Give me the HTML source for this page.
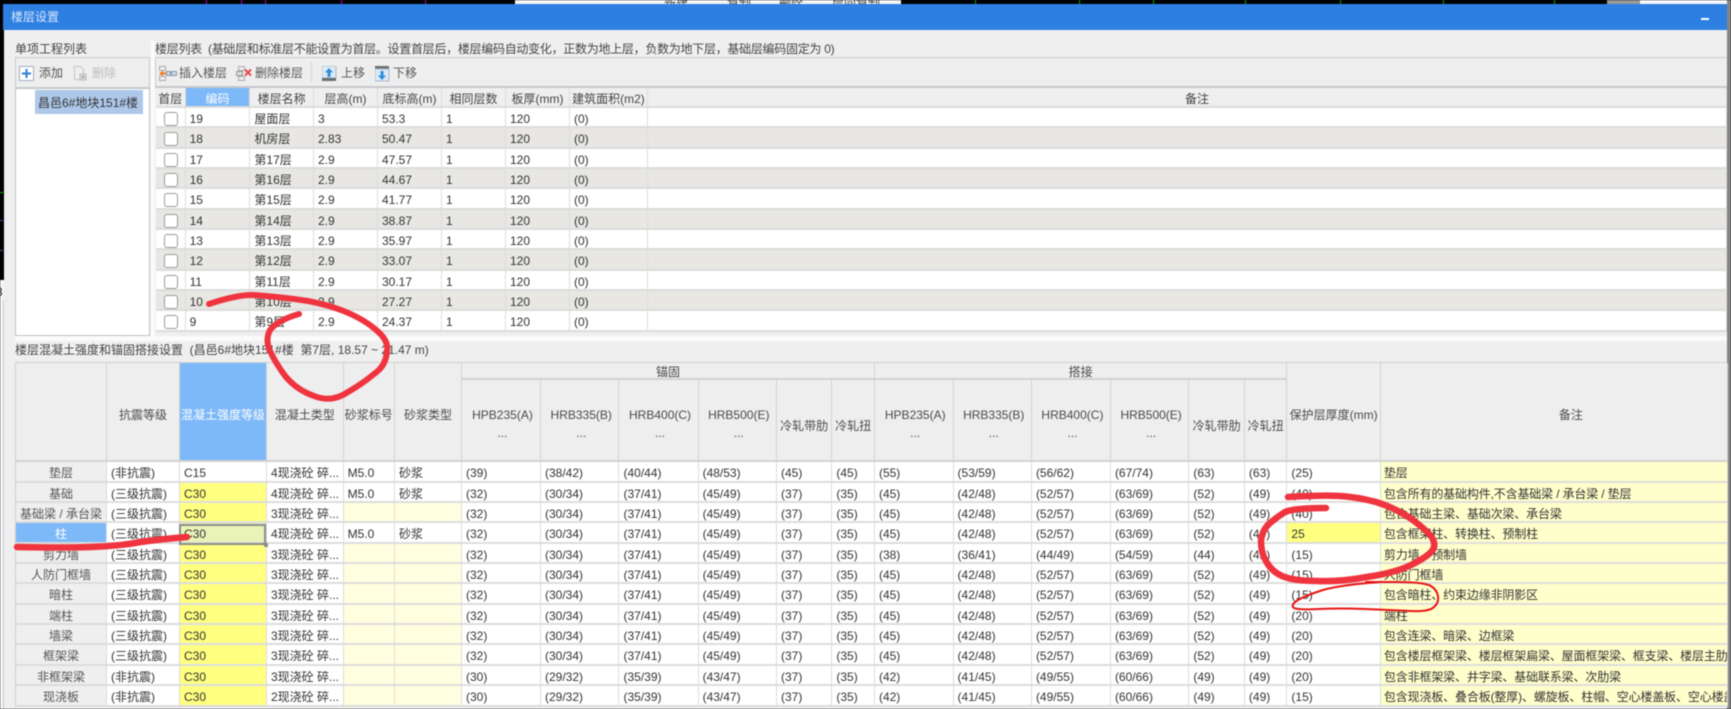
<!DOCTYPE html>
<html lang="zh"><head><meta charset="utf-8"><title>楼层设置</title>
<style>
html,body{margin:0;padding:0;background:#000}
body{width:1731px;height:709px;overflow:hidden;position:relative;font:12px/20px "Liberation Sans","Noto Sans CJK SC",sans-serif;color:#333}
#w{position:absolute;left:0;top:0;width:1731px;height:709px;overflow:hidden;filter:blur(.4px)}
.a{position:absolute;white-space:nowrap}
p{margin:0;overflow:hidden;white-space:nowrap;padding-left:4px;box-sizing:border-box;border-right:1px solid #dcdcdc;border-bottom:2px solid #dcdcdc;line-height:22px}
.r{display:contents}
.g{display:grid;position:absolute}
#u{left:156px;top:88px;width:1571px;grid-template-columns:29.6px 64.8px 63.6px 64px 64px 64px 64px 78px 1079px;grid-template-rows:20px;grid-auto-rows:20.35px;background:#fff}
#u .h p{background:#efefef;text-align:center;padding:0;color:#444;line-height:22px}
#u .h p.on,#l p.on{background:#7db8f8;color:#fff}
#u .z p{background:#e8e7e3}
#u .c{position:relative;background:#fff}
#u .z .c{background:#e8e7e3}
.c i{position:absolute;left:8px;top:4px;width:14px;height:14px;box-sizing:border-box;border:1px solid #9a9a9a;border-radius:3px;background:#fff}
#l{left:15px;top:363px;width:1712px;grid-template-columns:91px 73px 87px 76.6px 51.4px 67px 79px 78.5px 79.1px 78.4px 55.4px 42.6px 78.6px 78.4px 79px 78.4px 55.6px 42.5px 93.5px 347px;grid-template-rows:17.4px 82px;grid-auto-rows:20.35px;background:#fff;border-left:1px solid #d0d0d0;box-sizing:border-box}
#l .t{background:#eee;text-align:center;padding:2px 0 0;color:#4a4a4a;border-color:#d2d2d2;display:flex;align-items:center;justify-content:center;line-height:18px;white-space:normal}
#l .s{grid-row:span 2;padding-top:7px}
#l .m{padding:8px 0 0 3px}
#l .t2{padding-top:12px}
#l .k{background:#efefef;text-align:center;padding:0;color:#555}
#l .y{background:#ffff80}
#l .e{background:#ffffe0}
#l .n{background:#ffc;padding-left:3px;letter-spacing:-.15px}
#l p{line-height:22.5px}
#l p.on{background:#7db8f8;color:#fff}
.bd{position:absolute;box-sizing:border-box}
</style></head><body>
<div id="w">
<!-- background behind the dialog -->
<div class="bd" style="left:515px;top:0;width:386px;height:5px;background:#f4f5f7;overflow:hidden">
<span class="a" style="left:149px;top:-3px;line-height:14px;color:#444">新建</span><span class="a" style="left:212px;top:-3px;line-height:14px;color:#444">复制</span><span class="a" style="left:264px;top:-3px;line-height:14px;color:#444">删除</span><span class="a" style="left:317px;top:-3px;line-height:14px;color:#444">层间复制</span>
</div>
<div class="bd" style="left:206px;top:0;width:1px;height:5px;background:#c0c"></div>
<div class="bd" style="left:241px;top:0;width:1px;height:5px;background:#c0c"></div>
<div class="bd" style="left:265px;top:0;width:1px;height:5px;background:#c0c"></div>
<div class="bd" style="left:341px;top:0;width:1px;height:5px;background:#c0c"></div>
<div class="bd" style="left:425px;top:0;width:1px;height:5px;background:#c0c"></div>
<div class="bd" style="left:975px;top:0;width:1px;height:5px;background:#0a0"></div>
<div class="bd" style="left:1079px;top:0;width:1px;height:5px;background:#0a0"></div>
<div class="bd" style="left:1153px;top:0;width:1px;height:5px;background:#0a0"></div>
<div class="bd" style="left:1245px;top:0;width:1px;height:5px;background:#0a0"></div>
<div class="bd" style="left:1340px;top:0;width:1px;height:5px;background:#0a0"></div>
<div class="bd" style="left:1443px;top:0;width:1px;height:5px;background:#0a0"></div>
<div class="bd" style="left:1554px;top:0;width:1px;height:5px;background:#0a0"></div>
<div class="bd" style="left:1607px;top:0;width:33px;height:5px;background:#999"></div>
<div class="bd" style="left:1640px;top:0;width:87px;height:5px;background:#f5f7fb"></div>
<div class="bd" style="left:1727px;top:0;width:4px;height:709px;background:#848484"></div>
<div class="bd" style="left:0;top:192px;width:3px;height:1px;background:#0c0"></div>
<div class="bd" style="left:0;top:220px;width:3px;height:1px;background:#36a"></div>
<div class="bd" style="left:0;top:250px;width:3px;height:1px;background:#36a"></div>
<div class="bd" style="left:0;top:280px;width:4px;height:429px;background:#f6f6f6"></div>
<div class="a" style="left:-4px;top:282px;color:#333">8</div>
<div class="bd" style="left:3px;top:300px;width:1px;height:409px;background:#c6cad4"></div>

<!-- dialog -->
<div class="bd" style="left:4px;top:4px;width:1723px;height:705px;background:#efefef"></div>
<div class="bd" style="left:3px;top:4px;width:1724px;height:26px;background:#2d7fe2"></div>
<div class="a" style="left:11px;top:7px;color:#dbe9fb">楼层设置</div>
<div class="bd" style="left:1701px;top:18px;width:8px;height:2px;background:#fff"></div>

<!-- left panel -->
<div class="a" style="left:15px;top:39px;color:#444">单项工程列表</div>
<div class="bd" style="left:15px;top:57px;width:135px;height:31px;background:#eee;border:1px solid #c8cccc"></div>
<svg class="a" style="left:19px;top:66px" width="16" height="15" viewBox="0 0 16 15"><rect x=".5" y=".5" width="14" height="14" fill="#fff" stroke="#9fb0c0"/><path d="M7.5 3v9M3 7.500h9" stroke="#2d7fd8" stroke-width="2"/></svg>
<div class="a" style="left:39px;top:63px;color:#555">添加</div>
<svg class="a" style="left:72px;top:65px" width="16" height="17" viewBox="0 0 16 17"><path d="M2.500 1.500h6l3 3v10h-9z" fill="#efefef" stroke="#c4c4c4"/><rect x="8" y="9" width="6" height="6" fill="#ddd" stroke="#bbb"/><path d="M9.500 10.500l3 3m0-3l-3 3" stroke="#aaa"/></svg>
<div class="a" style="left:92px;top:63px;color:#bdbdbd">删除</div>
<div class="bd" style="left:15px;top:88px;width:135px;height:248px;background:#fff;border:1px solid #bfc3c3"></div>
<div class="bd" style="left:35px;top:90px;width:108px;height:24px;background:#aec8ea"></div>
<div class="a" style="left:38px;top:93px;color:#333">昌邑6#地块151#楼</div>

<!-- strip between panels -->
<div class="bd" style="left:151px;top:41px;width:4px;height:295px;background:#fafafa"></div>

<!-- upper panel -->
<div class="a" style="left:155px;top:39px;color:#444;letter-spacing:-.28px">楼层列表&nbsp; (基础层和标准层不能设置为首层。设置首层后，楼层编码自动变化，正数为地上层，负数为地下层，基础层编码固定为 0)</div>
<div class="bd" style="left:155px;top:57px;width:1572px;height:31px;background:#eee;border-top:1px solid #c8cccc;border-bottom:2px solid #c8c8cc;border-left:1px solid #c8cccc"></div>
<svg class="a" style="left:159px;top:66px" width="19" height="16" viewBox="0 0 19 16"><rect x=".5" y=".5" width="6" height="4" fill="#eee" stroke="#aaa"/><rect x=".5" y="10.500" width="6" height="4" fill="#eee" stroke="#aaa"/><rect x="7.500" y="5.500" width="4" height="4" fill="#cde" stroke="#89a"/><rect x="12.500" y="5.500" width="5" height="4" fill="#cde" stroke="#89a"/><path d="M0 7.500l4-3v2h3v2H4v2z" fill="#ef7d22"/></svg>
<div class="a" style="left:179px;top:63px;color:#555">插入楼层</div>
<svg class="a" style="left:236px;top:66px" width="17" height="16" viewBox="0 0 17 16"><rect x="2.500" y=".5" width="6" height="4" fill="#eee" stroke="#aaa"/><rect x="2.500" y="10.500" width="6" height="4" fill="#eee" stroke="#aaa"/><rect x=".5" y="5.500" width="6" height="4" fill="#ddd" stroke="#999"/><path d="M9 3.500l6 6m0-6l-6 6" stroke="#e5484d" stroke-width="2"/></svg>
<div class="a" style="left:255px;top:63px;color:#555">删除楼层</div>
<div class="bd" style="left:311px;top:62px;width:1px;height:20px;background:#d4d4d4"></div>
<svg class="a" style="left:322px;top:66px" width="15" height="16" viewBox="0 0 15 16"><rect width="14" height="12" fill="#dfe9f5" stroke="#a8b8c8"/><rect y="12" width="14" height="3" fill="#6a6f74"/><path d="M7 2l4 4.500H8.500V11h-3V6.500H3z" fill="#2d8fe0"/></svg>
<div class="a" style="left:341px;top:63px;color:#555">上移</div>
<svg class="a" style="left:375px;top:66px" width="15" height="16" viewBox="0 0 15 16"><rect y="0" width="14" height="3" fill="#6a6f74"/><rect y="3" width="14" height="12" fill="#dfe9f5" stroke="#a8b8c8"/><path d="M7 14l4-4.500H8.500V5h-3v4.500H3z" fill="#2d8fe0"/></svg>
<div class="a" style="left:393px;top:63px;color:#555">下移</div>

<div class="g" id="u">
<div class="r h"><p>首层</p><p class="on">编码</p><p>楼层名称</p><p>层高(m)</p><p>底标高(m)</p><p>相同层数</p><p>板厚(mm)</p><p>建筑面积(m2)</p><p style="padding-left:20px">备注</p></div>
<div class="r"><p class="c"><i></i></p><p>19</p><p>屋面层</p><p>3</p><p>53.3</p><p>1</p><p>120</p><p>(0)</p><p></p></div>
<div class="r z"><p class="c"><i></i></p><p>18</p><p>机房层</p><p>2.83</p><p>50.47</p><p>1</p><p>120</p><p>(0)</p><p></p></div>
<div class="r"><p class="c"><i></i></p><p>17</p><p>第17层</p><p>2.9</p><p>47.57</p><p>1</p><p>120</p><p>(0)</p><p></p></div>
<div class="r z"><p class="c"><i></i></p><p>16</p><p>第16层</p><p>2.9</p><p>44.67</p><p>1</p><p>120</p><p>(0)</p><p></p></div>
<div class="r"><p class="c"><i></i></p><p>15</p><p>第15层</p><p>2.9</p><p>41.77</p><p>1</p><p>120</p><p>(0)</p><p></p></div>
<div class="r z"><p class="c"><i></i></p><p>14</p><p>第14层</p><p>2.9</p><p>38.87</p><p>1</p><p>120</p><p>(0)</p><p></p></div>
<div class="r"><p class="c"><i></i></p><p>13</p><p>第13层</p><p>2.9</p><p>35.97</p><p>1</p><p>120</p><p>(0)</p><p></p></div>
<div class="r z"><p class="c"><i></i></p><p>12</p><p>第12层</p><p>2.9</p><p>33.07</p><p>1</p><p>120</p><p>(0)</p><p></p></div>
<div class="r"><p class="c"><i></i></p><p>11</p><p>第11层</p><p>2.9</p><p>30.17</p><p>1</p><p>120</p><p>(0)</p><p></p></div>
<div class="r z"><p class="c"><i></i></p><p>10</p><p>第10层</p><p>2.9</p><p>27.27</p><p>1</p><p>120</p><p>(0)</p><p></p></div>
<div class="r"><p class="c"><i></i></p><p>9</p><p>第9层</p><p>2.9</p><p>24.37</p><p>1</p><p>120</p><p>(0)</p><p></p></div>
</div>
<div class="bd" style="left:15px;top:336px;width:1712px;height:5px;background:#fbfbfb"></div>

<!-- lower panel -->
<div class="a" style="left:15px;top:340px;color:#444">楼层混凝土强度和锚固搭接设置&nbsp; (昌邑6#地块151#楼&nbsp; 第7层, 18.57 ~ 21.47 m)</div>
<div class="bd" style="left:15px;top:362px;width:1712px;height:1px;background:#cfcfcf"></div>
<div class="g" id="l">
<p class="t s"></p><p class="t s">抗震等级</p><p class="t s on">混凝土强度等级</p><p class="t s">混凝土类型</p><p class="t s">砂浆标号</p><p class="t s">砂浆类型</p>
<p class="t" style="grid-column:span 6">锚固</p><p class="t" style="grid-column:span 6">搭接</p><p class="t s">保护层厚度(mm)</p><p class="t s" style="padding-left:34px">备注</p>
<p class="t m">HPB235(A)<br>...</p><p class="t m">HRB335(B)<br>...</p><p class="t m">HRB400(C)<br>...</p><p class="t m">HRB500(E)<br>...</p><p class="t t2">冷轧带肋</p><p class="t t2">冷轧扭</p>
<p class="t m">HPB235(A)<br>...</p><p class="t m">HRB335(B)<br>...</p><p class="t m">HRB400(C)<br>...</p><p class="t m">HRB500(E)<br>...</p><p class="t t2">冷轧带肋</p><p class="t t2">冷轧扭</p>

<p class="k">垫层</p><p>(非抗震)</p><p>C15</p><p>4现浇砼 碎...</p><p>M5.0</p><p>砂浆</p><p>(39)</p><p>(38/42)</p><p>(40/44)</p><p>(48/53)</p><p>(45)</p><p>(45)</p><p>(55)</p><p>(53/59)</p><p>(56/62)</p><p>(67/74)</p><p>(63)</p><p>(63)</p><p>(25)</p><p class="n">垫层</p>
<p class="k">基础</p><p>(三级抗震)</p><p class="y">C30</p><p>4现浇砼 碎...</p><p>M5.0</p><p>砂浆</p><p>(32)</p><p>(30/34)</p><p>(37/41)</p><p>(45/49)</p><p>(37)</p><p>(35)</p><p>(45)</p><p>(42/48)</p><p>(52/57)</p><p>(63/69)</p><p>(52)</p><p>(49)</p><p>(40)</p><p class="n">包含所有的基础构件,不含基础梁 / 承台梁 / 垫层</p>
<p class="k">基础梁 / 承台梁</p><p>(三级抗震)</p><p class="y">C30</p><p>3现浇砼 碎...</p><p class="e"></p><p class="e"></p><p>(32)</p><p>(30/34)</p><p>(37/41)</p><p>(45/49)</p><p>(37)</p><p>(35)</p><p>(45)</p><p>(42/48)</p><p>(52/57)</p><p>(63/69)</p><p>(52)</p><p>(49)</p><p>(40)</p><p class="n">包含基础主梁、基础次梁、承台梁</p>
<p class="k on">柱</p><p>(三级抗震)</p><p style="background:#e9f3b8">C30</p><p>4现浇砼 碎...</p><p>M5.0</p><p>砂浆</p><p>(32)</p><p>(30/34)</p><p>(37/41)</p><p>(45/49)</p><p>(37)</p><p>(35)</p><p>(45)</p><p>(42/48)</p><p>(52/57)</p><p>(63/69)</p><p>(52)</p><p>(49)</p><p class="y">25</p><p class="n">包含框架柱、转换柱、预制柱</p>
<p class="k">剪力墙</p><p>(三级抗震)</p><p class="y">C30</p><p>3现浇砼 碎...</p><p class="e"></p><p class="e"></p><p>(32)</p><p>(30/34)</p><p>(37/41)</p><p>(45/49)</p><p>(37)</p><p>(35)</p><p>(38)</p><p>(36/41)</p><p>(44/49)</p><p>(54/59)</p><p>(44)</p><p>(42)</p><p>(15)</p><p class="n">剪力墙、预制墙</p>
<p class="k">人防门框墙</p><p>(三级抗震)</p><p class="y">C30</p><p>3现浇砼 碎...</p><p class="e"></p><p class="e"></p><p>(32)</p><p>(30/34)</p><p>(37/41)</p><p>(45/49)</p><p>(37)</p><p>(35)</p><p>(45)</p><p>(42/48)</p><p>(52/57)</p><p>(63/69)</p><p>(52)</p><p>(49)</p><p>(15)</p><p class="n">人防门框墙</p>
<p class="k">暗柱</p><p>(三级抗震)</p><p class="y">C30</p><p>3现浇砼 碎...</p><p class="e"></p><p class="e"></p><p>(32)</p><p>(30/34)</p><p>(37/41)</p><p>(45/49)</p><p>(37)</p><p>(35)</p><p>(45)</p><p>(42/48)</p><p>(52/57)</p><p>(63/69)</p><p>(52)</p><p>(49)</p><p>(15)</p><p class="n">包含暗柱、约束边缘非阴影区</p>
<p class="k">端柱</p><p>(三级抗震)</p><p class="y">C30</p><p>3现浇砼 碎...</p><p class="e"></p><p class="e"></p><p>(32)</p><p>(30/34)</p><p>(37/41)</p><p>(45/49)</p><p>(37)</p><p>(35)</p><p>(45)</p><p>(42/48)</p><p>(52/57)</p><p>(63/69)</p><p>(52)</p><p>(49)</p><p>(20)</p><p class="n">端柱</p>
<p class="k">墙梁</p><p>(三级抗震)</p><p class="y">C30</p><p>3现浇砼 碎...</p><p class="e"></p><p class="e"></p><p>(32)</p><p>(30/34)</p><p>(37/41)</p><p>(45/49)</p><p>(37)</p><p>(35)</p><p>(45)</p><p>(42/48)</p><p>(52/57)</p><p>(63/69)</p><p>(52)</p><p>(49)</p><p>(20)</p><p class="n">包含连梁、暗梁、边框梁</p>
<p class="k">框架梁</p><p>(三级抗震)</p><p class="y">C30</p><p>3现浇砼 碎...</p><p class="e"></p><p class="e"></p><p>(32)</p><p>(30/34)</p><p>(37/41)</p><p>(45/49)</p><p>(37)</p><p>(35)</p><p>(45)</p><p>(42/48)</p><p>(52/57)</p><p>(63/69)</p><p>(52)</p><p>(49)</p><p>(20)</p><p class="n">包含楼层框架梁、楼层框架扁梁、屋面框架梁、框支梁、楼层主肋梁、基础联系梁</p>
<p class="k">非框架梁</p><p>(非抗震)</p><p class="y">C30</p><p>3现浇砼 碎...</p><p class="e"></p><p class="e"></p><p>(30)</p><p>(29/32)</p><p>(35/39)</p><p>(43/47)</p><p>(37)</p><p>(35)</p><p>(42)</p><p>(41/45)</p><p>(49/55)</p><p>(60/66)</p><p>(49)</p><p>(49)</p><p>(20)</p><p class="n">包含非框架梁、井字梁、基础联系梁、次肋梁</p>
<p class="k">现浇板</p><p>(非抗震)</p><p class="y">C30</p><p>2现浇砼 碎...</p><p class="e"></p><p class="e"></p><p>(30)</p><p>(29/32)</p><p>(35/39)</p><p>(43/47)</p><p>(37)</p><p>(35)</p><p>(42)</p><p>(41/45)</p><p>(49/55)</p><p>(60/66)</p><p>(49)</p><p>(49)</p><p>(15)</p><p class="n">包含现浇板、叠合板(整厚)、螺旋板、柱帽、空心楼盖板、空心楼盖柱帽</p>
</div>
<!-- selected cell -->
<div class="bd" style="left:179px;top:524px;width:87px;height:21px;border:2px solid #8c8c8c"></div>
<div class="bd" style="left:264px;top:543px;width:4px;height:4px;background:#8c8c8c"></div>

<!-- hand-drawn annotations -->
<svg class="a" style="left:0;top:0" width="1731" height="709" viewBox="0 0 1731 709" fill="none" stroke-linecap="round" stroke-linejoin="round">
<path d="M209 304Q236 295 252 295Q269 296 294 299Q320 302 341 310Q362 318 375 329Q389 340 387 351Q386 366 374 374Q362 384 348 392Q332 403 314 396Q297 390 286 377Q276 364 270 351Q265 340 270 330Q278 320 299 314" stroke="#f0343f" stroke-width="6"/>
<path d="M17 547Q63 548 90 547Q118 546 135 543Q151 540 187 537" stroke="#f0343f" stroke-width="6.500"/>
<path d="M1288 497Q1323 495 1340 496Q1357 497 1376 502Q1395 508 1410 518Q1424 528 1431 536Q1437 545 1432 551Q1427 557 1411 565Q1395 573 1367 577Q1340 582 1317 581Q1294 581 1282 576Q1271 571 1266 561Q1261 553 1261 541Q1262 530 1270 523Q1277 517 1285 512Q1294 508 1326 508" stroke="#f0343f" stroke-width="6.500"/>
<path d="M1380 582Q1340 585 1323 590Q1307 595 1298 600Q1290 605 1294 608Q1298 610 1319 609Q1340 608 1365 609Q1391 610 1410 611Q1429 612 1434 607Q1439 603 1438 596Q1437 590 1431 586Q1424 582 1395 582L1366 582" stroke="#e81414" stroke-width="2"/>
</svg>
</div>
</body></html>
